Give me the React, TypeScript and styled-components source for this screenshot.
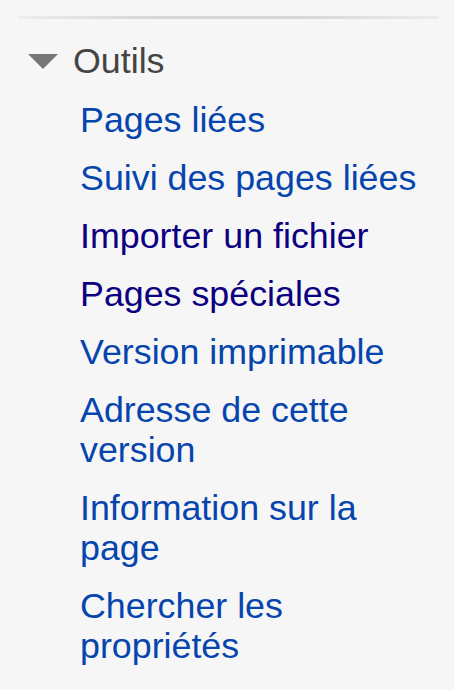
import React from "react";
import styled, { createGlobalStyle } from "styled-components";

const GlobalStyle = createGlobalStyle`
  html, body {
    margin: 0;
    padding: 0;
    background: #f6f6f6;
  }
  body {
    font-family: "Liberation Sans", Arial, sans-serif;
  }
`;

const Portal = styled.nav`
  width: 454px;
  min-height: 690px;
  box-sizing: border-box;
  padding: 16px 14px 0 19px;
  background: #f6f6f6;
  font-family: "Liberation Sans", Arial, sans-serif;
  font-size: 35.8px;
`;

const Divider = styled.div`
  height: 3px;
  width: 420px;
  background-image: linear-gradient(
    to right,
    #ececec 0,
    #d6d6d6 33%,
    #d6d6d6 66%,
    #ececec 100%
  );
`;

const Heading = styled.h3`
  display: flex;
  align-items: center;
  gap: 15px;
  margin: 22px 0 0 9px;
  padding: 0;
  font-size: 1em;
  font-weight: normal;
  line-height: 40px;
  color: #444;
`;

const Arrow = styled.svg`
  width: 30px;
  height: 15px;
  flex: none;
  margin-top: 1px;
`;

const List = styled.ul`
  list-style: none;
  margin: 10px 0 0 61px;
  padding: 0;
`;

const Item = styled.li`
  padding: 9px 0;
  line-height: 40px;
  max-width: 350px;
`;

const Link = styled.a<{ $visited?: boolean }>`
  color: ${(p) => (p.$visited ? "#0b0080" : "#0645ad")};
  text-decoration: none;
`;

const links: { label: string; visited?: boolean }[] = [
  { label: "Pages liées" },
  { label: "Suivi des pages liées" },
  { label: "Importer un fichier", visited: true },
  { label: "Pages spéciales", visited: true },
  { label: "Version imprimable" },
  { label: "Adresse de cette version" },
  { label: "Information sur la page" },
  { label: "Chercher les propriétés" },
];

export default function App() {
  return (
    <>
      <GlobalStyle />
      <Portal>
        <Divider />
        <Heading>
          <Arrow viewBox="0 0 30 15" aria-hidden="true">
            <polygon points="0,0 30,0 15,15" fill="#777" />
          </Arrow>
          Outils
        </Heading>
        <List>
          {links.map((l) => (
            <Item key={l.label}>
              <Link href="#" $visited={l.visited}>
                {l.label}
              </Link>
            </Item>
          ))}
        </List>
      </Portal>
    </>
  );
}
